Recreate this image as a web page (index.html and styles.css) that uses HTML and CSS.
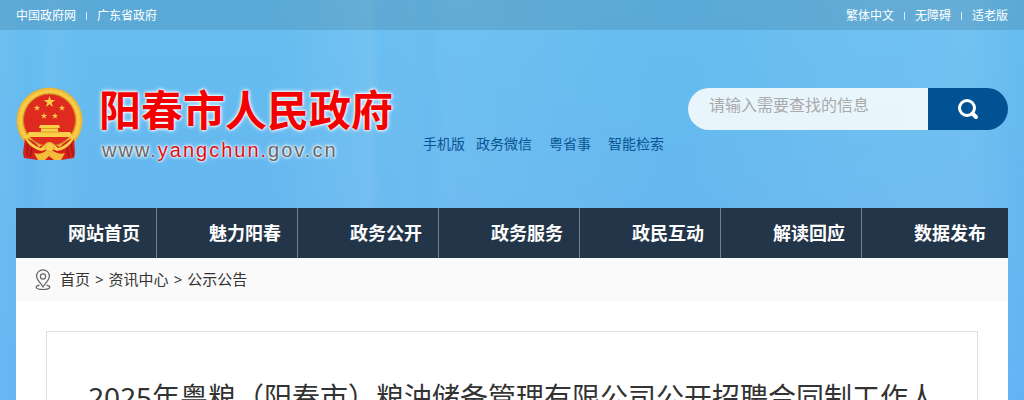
FILE: index.html
```html
<!DOCTYPE html>
<html lang="zh-CN">
<head>
    <meta charset="utf-8">
    <title>阳春市人民政府</title>
    <link rel="stylesheet" href="styles.css">
</head>
<body>
    <!-- top bar -->
    <div class="top">
        <ul class="top-links">
            <li><a href="#">中国政府网</a></li>
            <li><a href="#">广东省政府</a></li>
        </ul>
        <ul class="top-links">
            <li><a href="#">繁体中文</a></li>
            <li><a href="#">无障碍</a></li>
            <li><a href="#">适老版</a></li>
        </ul>
    </div>

    <div class="wrap">
        <!-- header -->
        <div class="header">
            <a class="logo" href="#">
                <svg class="emblem" viewBox="0 0 67 74" width="67" height="74">
                    <defs>
                        <radialGradient id="gold">
                            <stop offset="0.75" stop-color="#e6a322"/>
                            <stop offset="0.88" stop-color="#fbd34e"/>
                            <stop offset="1" stop-color="#e9ae2c"/>
                        </radialGradient>
                        <polygon id="star" points="0,-6 1.4,-1.9 5.7,-1.9 2.2,0.7 3.5,4.9 0,2.3 -3.5,4.9 -2.2,0.7 -5.7,-1.9 -1.4,-1.9"/>
                    </defs>
                    <circle cx="33.500" cy="33.500" r="33" fill="url(#gold)"/>
                    <circle cx="33.500" cy="33.500" r="29" fill="none" stroke="#dda02a" stroke-width="5" stroke-dasharray="1 4" opacity=".2"/>
                    <circle cx="33.500" cy="33" r="26" fill="#df2a20" stroke="#cf7b1b" stroke-width="1"/>
                    <g fill="#f9cf48">
                        <use href="#star" x="33.500" y="15"/>
                        <use href="#star" transform="translate(21 21) scale(.55)"/>
                        <use href="#star" transform="translate(46 21) scale(.55)"/>
                        <use href="#star" transform="translate(28 29) scale(.55)"/>
                        <use href="#star" transform="translate(39 29) scale(.55)"/>
                        <path d="M24 38h19l1 3h-2v4h12l3 5H10l3-5h12v-4h-2z"/>
                    </g>
                    <path d="M25 41.500h17M23 45h21" stroke="#e09a25" stroke-width="1"/>
                    <path d="M9 51q9 2 14 9l10-5 11 5q6-7 14-9l1 15-1 5-13 2H22L8 71l-1-5z" fill="#d3201d"/>
                    <path d="M12 56l-1 13M16 60l-2 10M51 60l2 10M55 56l2 13" stroke="#a31815" stroke-width="1.500"/>
                    <path d="M10 50q7 9 15 11l4-4q4-4 9 0l4 4q8-2 15-11l1 2q-7 11-17 12l-7-3-8 3Q15 62 9 52z" fill="#fbcd48"/>
                    <path d="M18 66q6 2 10-1l5-3 6 3q5 3 10 1l-4 7h-7l-5-4-4 4h-7z" fill="#f3bd3a"/>
                    <circle cx="33.500" cy="60" r="4.500" fill="#f9ca45" stroke="#e09a25" stroke-width="1" stroke-dasharray="2 1"/>
                </svg>
                <span class="logo-text">
                    <strong class="logo-name">阳春市人民政府</strong>
                    <span class="logo-url">www.<em>yangchun.</em>gov.cn</span>
                </span>
            </a>
            <ul class="quick">
                <li><a href="#">手机版</a></li>
                <li><a href="#">政务微信</a></li>
                <li><a href="#">粤省事</a></li>
                <li><a href="#">智能检索</a></li>
            </ul>
            <form class="search">
                <input class="search-text" type="text" aria-label="搜索" placeholder="请输入需要查找的信息">
                <button class="search-btn" type="button" aria-label="搜索">
                    <svg viewBox="0 0 22 22" width="22" height="22" fill="none" stroke="#fff">
                        <circle cx="10" cy="10" r="7.500" stroke-width="3"/>
                        <path d="M15.500 15.500l3.500 3.500" stroke-width="4" stroke-linecap="round"/>
                    </svg>
                </button>
            </form>
        </div>

        <!-- nav -->
        <ul class="nav">
            <li><a href="#">网站首页</a></li>
            <li><a href="#">魅力阳春</a></li>
            <li><a href="#">政务公开</a></li>
            <li><a href="#">政务服务</a></li>
            <li><a href="#">政民互动</a></li>
            <li><a href="#">解读回应</a></li>
            <li><a href="#">数据发布</a></li>
        </ul>

        <!-- content -->
        <div class="main">
            <div class="crumbs">
                <svg viewBox="0 0 16 22" width="16" height="22" fill="none" stroke="#666" stroke-width="1.200">
                    <path d="M8 18C5 13 1.600 11 1.600 7.200a6.400 6.400 0 0 1 12.800 0C14.400 11 11 13 8 18z"/>
                    <circle cx="8" cy="7.500" r="2.600"/>
                    <path d="M4.500 16.200C2.500 16.600 1.200 17.300 1.200 18.300c0 1.400 3 2.200 6.800 2.200s6.800-.8 6.800-2.200c0-1-1.300-1.700-3.300-2.100"/>
                </svg>
                <div class="path">
                    <a href="#">首页</a>
                    <span>&gt;</span>
                    <a href="#">资讯中心</a>
                    <span>&gt;</span>
                    <a href="#">公示公告</a>
                </div>
            </div>
            <div class="article">
                <h1>2025年粤粮（阳春市）粮油储备管理有限公司公开招聘合同制工作人员公告</h1>
            </div>
        </div>
    </div>
</body>
</html>
```
FILE: styles.css
```css
* {
    box-sizing: border-box;
}
body {
    margin: 0;
    font-family: "Noto Sans", "Noto Sans CJK SC", sans-serif;
    font-size: 14px;
    color: #333;
    background:
        linear-gradient(90deg, transparent 372px, rgba(70, 170, 235, .16) 380px, rgba(70, 170, 235, .1) 410px, rgba(70, 170, 235, .14) 430px, transparent 446px),
        linear-gradient(90deg, rgba(255, 255, 255, .05), transparent 3%, rgba(255, 255, 255, .05) 5%, transparent 9%, transparent 26%, rgba(255, 255, 255, .09) 36%, rgba(255, 255, 255, .06) 46%, transparent 66%, rgba(255, 255, 255, .06) 84%, rgba(255, 255, 255, .08) 95%, transparent),
        linear-gradient(#65bdf0, #64bbef 90px, #66b7f0 208px, #63b3f4 400px);
}
ul {
    margin: 0;
    padding: 0;
    list-style: none;
}
a {
    color: inherit;
    text-decoration: none;
}

/* top bar */
.top {
    display: flex;
    justify-content: space-between;
    height: 30px;
    padding: 1px 16px 0;
    background: rgba(50, 90, 110, .2);
    color: #fff;
    font-size: 12px;
    line-height: 30px;
}
.top-links {
    display: flex;
}
.top-links li {
    display: flex;
    align-items: center;
}
.top-links li + li::before {
    content: "";
    width: 1px;
    height: 8px;
    margin: 0 10px;
    background: #d5e9f5;
}

.wrap {
    margin: 0 16px;
}

/* header */
.header {
    display: flex;
    align-items: flex-start;
    height: 178px;
    padding-top: 57px;
}
.logo {
    display: flex;
    gap: 16px;
}
.logo-text {
    display: flex;
    flex-direction: column;
    white-space: nowrap;
    text-shadow: 0 0 2px #fff, 0 0 3px #fff, 0 0 5px #fff;
}
.logo-name {
    color: #f50000;
    font-size: 42px;
    line-height: 46px;
}
.logo-url {
    padding-left: 3px;
    color: #666;
    font-family: "Liberation Sans", sans-serif;
    font-size: 20px;
    line-height: 34px;
    letter-spacing: 2px;
}
.logo-url em {
    color: #e00d14;
    font-style: normal;
}
.quick {
    display: flex;
    margin: 46px 0 0 30px;
    color: #0b5394;
    line-height: 22px;
    white-space: nowrap;
}
.quick li + li {
    margin-left: 11px;
}
.quick li + li + li {
    margin-left: 17px;
}
.search {
    display: flex;
    width: 320px;
    height: 42px;
    margin: 1px 0 0 auto;
    border-radius: 21px;
    overflow: hidden;
}
.search-text {
    flex: 1;
    min-width: 0;
    padding: 0 20px 8px 21px;
    border: 0;
    background: rgba(255, 255, 255, .85);
    font-family: inherit;
    font-size: 16px;
}
.search-text::placeholder {
    color: #a9a9a9;
}
.search-btn {
    display: flex;
    align-items: center;
    justify-content: center;
    width: 80px;
    padding: 0;
    border: 0;
    background: #005293;
    cursor: pointer;
}

/* nav */
.nav {
    display: grid;
    grid-template-columns: repeat(6, 141fr) 146fr;
    background: #223549;
    color: #fff;
    font-size: 18px;
    font-weight: bold;
    line-height: 50px;
}
.nav li {
    padding-left: 52px;
    border-right: 1px solid #727f8c;
    white-space: nowrap;
}
.nav li:last-child {
    border-right: 0;
}

/* content */
.main {
    background: #fff;
    padding-bottom: 30px;
}
.crumbs {
    display: flex;
    align-items: center;
    gap: 9px;
    height: 43px;
    padding-left: 19px;
    background: #fafafa;
    font-size: 15px;
}
.path {
    display: flex;
    gap: 5px;
    line-height: 20px;
    padding-bottom: 2px;
}
.article {
    margin: 30px 30px 0;
    padding: 40px;
    border: 1px solid #ddd;
}
.article h1 {
    margin: 0;
    font-size: 28px;
    font-weight: normal;
    line-height: 50px;
    text-align: center;
}
```
